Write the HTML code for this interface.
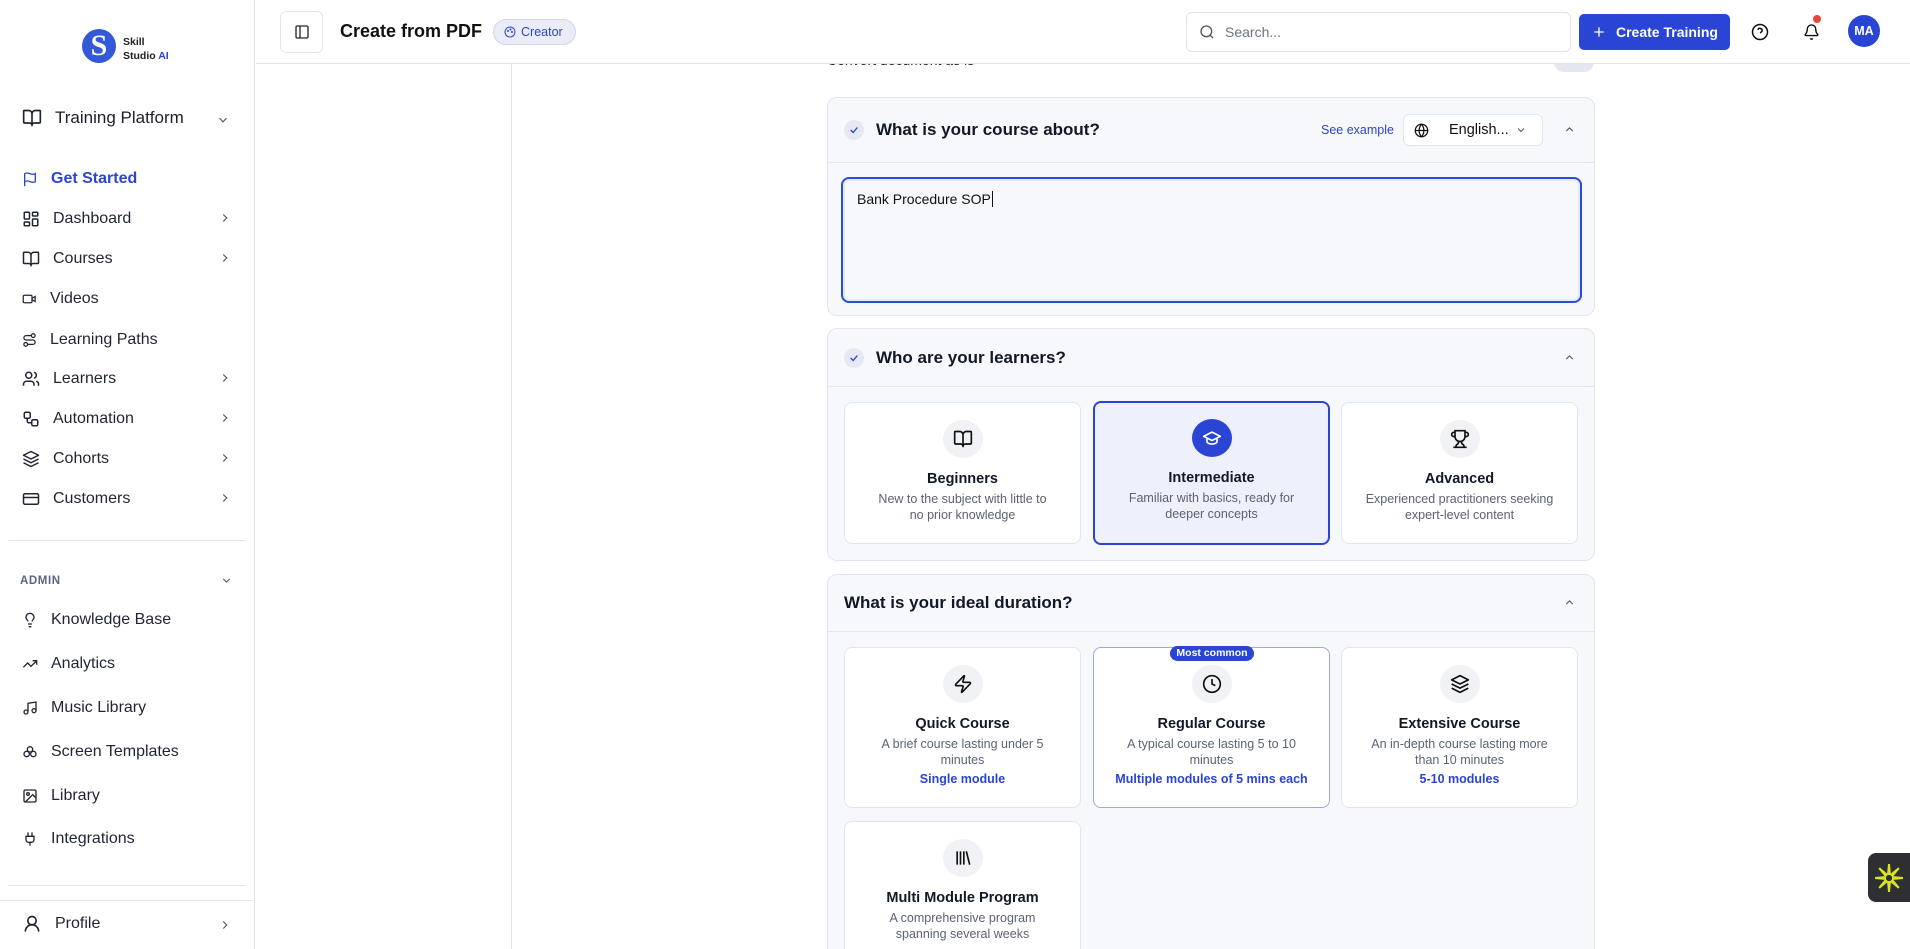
<!DOCTYPE html>
<html><head><meta charset="utf-8"><style>
*{box-sizing:border-box;margin:0;padding:0}
html,body{width:1910px;height:949px;overflow:hidden}
body{background:#fff;font-family:"Liberation Sans",sans-serif;color:#111827;position:relative}
.abs{position:absolute}
svg{display:block}
.side{position:absolute;left:0;top:0;width:255px;height:949px;border-right:1px solid #e3e6ee;background:#fff}
.nav{position:absolute;left:22px;display:flex;align-items:center;font-size:16px;color:#1f2533}
.nav svg{margin-right:13px}
.hdr{position:absolute;left:256px;top:0;right:0;height:64px;border-bottom:1px solid #e3e6ee;background:#fff}
.card{position:absolute;left:827px;width:768px;background:#f7f8fc;border:1px solid #e1e5f0;border-radius:10px}
.chd{position:absolute;left:0;right:0;top:0;border-bottom:1px solid #e1e5f0}
.ct{position:absolute;font-size:17px;font-weight:600;color:#111827}
.chk{position:absolute;width:20px;height:20px;border-radius:50%;background:#e6e9f3}
.opt{position:absolute;width:237px;background:#fff;border:1px solid #e1e5f0;border-radius:8px;text-align:center}
.ic{width:40px;height:38px;border-radius:50%;background:#f0f2f6;margin:17px auto 0;display:flex;align-items:center;justify-content:center}
.ot{font-size:14.5px;font-weight:600;margin-top:13px;color:#111827}
.od{font-size:12.5px;color:#5b6272;line-height:15.5px;margin-top:5px;padding:0 26px}
.ob{font-size:12.5px;color:#2a44d4;font-weight:600;margin-top:4px}
</style></head><body>

<div class="side">
  <div class="abs" style="left:82px;top:29px;width:34px;height:34px;border-radius:50%;background:#3359d8;color:#fff;font-size:30px;font-weight:700;text-align:center;line-height:34px;font-family:'Liberation Serif',serif">S</div>
  <div class="abs" style="left:123px;top:35px;font-size:10.5px;font-weight:600;line-height:14px;color:#222">Skill<br>Studio <span style="color:#2a44d4">AI</span></div>

  <div class="nav" style="left:22px;top:108px;font-size:17px;font-weight:500;color:#1b1f2a">
    <svg width="20" height="20" viewBox="0 0 24 24" fill="none" stroke="#1f2533" stroke-width="2" stroke-linecap="round" stroke-linejoin="round"><path d="M12 7v14M3 18a1 1 0 0 1-1-1V4a1 1 0 0 1 1-1h5a4 4 0 0 1 4 4 4 4 0 0 1 4-4h5a1 1 0 0 1 1 1v13a1 1 0 0 1-1 1h-6a3 3 0 0 0-3 3 3 3 0 0 0-3-3z"/></svg>Training Platform</div>
  <svg class="abs" style="left:216px;top:113px" width="14" height="14" viewBox="0 0 24 24" fill="none" stroke="#555" stroke-width="2"><path d="m6 9 6 6 6-6"/></svg>

  <div class="nav" style="top:170px;color:#2a44d4;font-weight:600"><svg width="16" height="18" viewBox="0 0 24 24" fill="none" stroke="#2a44d4" stroke-width="2" stroke-linecap="round"><path d="M4 22V4s1-1 4-1 5 2 8 2 4-1 4-1v12s-1 1-4 1-5-2-8-2-4 1-4 1"/></svg>Get Started</div>
  <div class="nav" style="top:210px"><svg width="18" height="18" viewBox="0 0 24 24" fill="none" stroke="#1f2533" stroke-width="2"><rect x="3" y="3" width="7" height="9" rx="1"/><rect x="14" y="3" width="7" height="5" rx="1"/><rect x="14" y="12" width="7" height="9" rx="1"/><rect x="3" y="16" width="7" height="5" rx="1"/></svg>Dashboard</div>
  <div class="nav" style="top:250px"><svg width="18" height="18" viewBox="0 0 24 24" fill="none" stroke="#1f2533" stroke-width="2" stroke-linejoin="round"><path d="M12 7v14M3 18a1 1 0 0 1-1-1V4a1 1 0 0 1 1-1h5a4 4 0 0 1 4 4 4 4 0 0 1 4-4h5a1 1 0 0 1 1 1v13a1 1 0 0 1-1 1h-6a3 3 0 0 0-3 3 3 3 0 0 0-3-3z"/></svg>Courses</div>
  <div class="nav" style="top:290px"><svg width="15" height="18" viewBox="0 0 24 24" fill="none" stroke="#1f2533" stroke-width="2"><path d="m16 13 5 3V8l-5 3"/><rect x="2" y="6" width="14" height="12" rx="2"/></svg>Videos</div>
  <div class="nav" style="top:331px"><svg width="15" height="18" viewBox="0 0 24 24" fill="none" stroke="#1f2533" stroke-width="2"><circle cx="6" cy="19" r="3"/><path d="M9 19h8.5a3.5 3.5 0 0 0 0-7h-11a3.5 3.5 0 0 1 0-7H15"/><circle cx="18" cy="5" r="3"/></svg>Learning Paths</div>
  <div class="nav" style="top:370px"><svg width="18" height="18" viewBox="0 0 24 24" fill="none" stroke="#1f2533" stroke-width="2"><path d="M16 21v-2a4 4 0 0 0-4-4H6a4 4 0 0 0-4 4v2"/><circle cx="9" cy="7" r="4"/><path d="M22 21v-2a4 4 0 0 0-3-3.9M16 3.1a4 4 0 0 1 0 7.8"/></svg>Learners</div>
  <div class="nav" style="top:410px"><svg width="18" height="18" viewBox="0 0 24 24" fill="none" stroke="#1f2533" stroke-width="2"><rect x="3" y="3" width="8" height="8" rx="2"/><path d="M7 11v4a2 2 0 0 0 2 2h4"/><rect x="13" y="13" width="8" height="8" rx="2"/></svg>Automation</div>
  <div class="nav" style="top:450px"><svg width="18" height="18" viewBox="0 0 24 24" fill="none" stroke="#1f2533" stroke-width="2" stroke-linejoin="round"><path d="m12 2 10 5-10 5L2 7z"/><path d="m2 12 10 5 10-5M2 17l10 5 10-5"/></svg>Cohorts</div>
  <div class="nav" style="top:490px"><svg width="18" height="18" viewBox="0 0 24 24" fill="none" stroke="#1f2533" stroke-width="2"><rect x="2" y="5" width="20" height="14" rx="2"/><path d="M2 10h20"/></svg>Customers</div>

  <svg class="abs" style="left:218px;top:211px" width="14" height="14" viewBox="0 0 24 24" fill="none" stroke="#555" stroke-width="2"><path d="m9 6 6 6-6 6"/></svg>
  <svg class="abs" style="left:218px;top:251px" width="14" height="14" viewBox="0 0 24 24" fill="none" stroke="#555" stroke-width="2"><path d="m9 6 6 6-6 6"/></svg>
  <svg class="abs" style="left:218px;top:371px" width="14" height="14" viewBox="0 0 24 24" fill="none" stroke="#555" stroke-width="2"><path d="m9 6 6 6-6 6"/></svg>
  <svg class="abs" style="left:218px;top:411px" width="14" height="14" viewBox="0 0 24 24" fill="none" stroke="#555" stroke-width="2"><path d="m9 6 6 6-6 6"/></svg>
  <svg class="abs" style="left:218px;top:451px" width="14" height="14" viewBox="0 0 24 24" fill="none" stroke="#555" stroke-width="2"><path d="m9 6 6 6-6 6"/></svg>
  <svg class="abs" style="left:218px;top:491px" width="14" height="14" viewBox="0 0 24 24" fill="none" stroke="#555" stroke-width="2"><path d="m9 6 6 6-6 6"/></svg>

  <div class="abs" style="left:8px;top:540px;width:238px;height:1px;background:#e3e6ee"></div>
  <div class="abs" style="left:20px;top:575px;font-size:11.5px;font-weight:600;color:#5b6580;letter-spacing:.6px">ADMIN</div>
  <svg class="abs" style="left:220px;top:574px" width="13" height="13" viewBox="0 0 24 24" fill="none" stroke="#555" stroke-width="2"><path d="m6 9 6 6 6-6"/></svg>

  <div class="nav" style="top:611px"><svg width="16" height="16" viewBox="0 0 24 24" fill="none" stroke="#1f2533" stroke-width="2"><path d="M15 14c.2-1 .7-1.7 1.5-2.5 1-.9 1.5-2.2 1.5-3.5A6 6 0 0 0 6 8c0 1 .2 2.2 1.5 3.5.7.7 1.3 1.5 1.5 2.5M9 18h6M10 22h4"/></svg>Knowledge Base</div>
  <div class="nav" style="top:655px"><svg width="16" height="16" viewBox="0 0 24 24" fill="none" stroke="#1f2533" stroke-width="2"><path d="m22 7-8.5 8.5-5-5L2 17M16 7h6v6"/></svg>Analytics</div>
  <div class="nav" style="top:699px"><svg width="16" height="16" viewBox="0 0 24 24" fill="none" stroke="#1f2533" stroke-width="2"><path d="M9 18V5l12-2v13"/><circle cx="6" cy="18" r="3"/><circle cx="18" cy="16" r="3"/></svg>Music Library</div>
  <div class="nav" style="top:743px"><svg width="16" height="16" viewBox="0 0 24 24" fill="none" stroke="#1f2533" stroke-width="2"><circle cx="12" cy="8" r="4"/><circle cx="7" cy="15" r="4"/><circle cx="17" cy="15" r="4"/></svg>Screen Templates</div>
  <div class="nav" style="top:787px"><svg width="16" height="16" viewBox="0 0 24 24" fill="none" stroke="#1f2533" stroke-width="2"><rect x="3" y="3" width="18" height="18" rx="2"/><circle cx="9" cy="9" r="2"/><path d="m21 15-5-5L5 21"/></svg>Library</div>
  <div class="nav" style="top:830px"><svg width="16" height="16" viewBox="0 0 24 24" fill="none" stroke="#1f2533" stroke-width="2"><path d="M12 22v-5M9 8V2M15 8V2M18 8v5a4 4 0 0 1-4 4h-4a4 4 0 0 1-4-4V8z"/></svg>Integrations</div>

  <div class="abs" style="left:8px;top:885px;width:238px;height:1px;background:#e3e6ee"></div>
  <div class="abs" style="left:0;top:900px;width:255px;height:1px;background:#e3e6ee"></div>
  <div class="nav" style="top:914px"><svg width="20" height="20" viewBox="0 0 24 24" fill="none" stroke="#1f2533" stroke-width="2"><circle cx="12" cy="8" r="5"/><path d="M20 21a8 8 0 0 0-16 0"/></svg>Profile</div>
  <svg class="abs" style="left:218px;top:918px" width="14" height="14" viewBox="0 0 24 24" fill="none" stroke="#555" stroke-width="2"><path d="m9 6 6 6-6 6"/></svg>
</div>

<div class="abs" style="left:511px;top:64px;width:1px;height:885px;background:#e3e6ee"></div>

<div class="abs" style="left:827px;top:52px;font-size:14px;color:#222">Convert document as is</div>
<div class="abs" style="left:1554px;top:52px;width:40px;height:20px;border-radius:10px;background:#e4e7ef"></div>

<div class="hdr">
  <div class="abs" style="left:24px;top:11px;width:43px;height:42px;border:1px solid #e3e6ee;border-radius:6px;display:flex;align-items:center;justify-content:center"><svg width="16" height="16" viewBox="0 0 24 24" fill="none" stroke="#1f2533" stroke-width="2"><rect x="3" y="3" width="18" height="18" rx="2"/><path d="M9 3v18"/></svg></div>
  <div class="abs" style="left:84px;top:21px;font-size:18px;font-weight:700;color:#111">Create from PDF</div>
  <div class="abs" style="left:237px;top:19px;width:83px;height:26px;border-radius:13px;background:#eaedf8;border:1px solid #cfd6ee;font-size:12.5px;color:#2a44d4;display:flex;align-items:center;padding-left:10px"><svg width="12" height="12" viewBox="0 0 24 24" fill="none" stroke="#2a44d4" stroke-width="2" style="margin-right:5px"><circle cx="12" cy="12" r="10"/><circle cx="8" cy="10" r="1"/><circle cx="13" cy="7" r="1"/><circle cx="16" cy="12" r="1"/></svg>Creator</div>
  <div class="abs" style="left:930px;top:12px;width:385px;height:40px;border:1px solid #dfe3ee;border-radius:6px;display:flex;align-items:center;padding-left:12px;font-size:14px;color:#6b7280"><svg width="16" height="16" viewBox="0 0 24 24" fill="none" stroke="#555" stroke-width="2" style="margin-right:10px"><circle cx="11" cy="11" r="8"/><path d="m21 21-4.3-4.3"/></svg>Search...</div>
  <div class="abs" style="left:1323px;top:14px;width:151px;height:36px;border-radius:5px;background:#2a44d4;color:#fff;font-size:14px;font-weight:600;display:flex;align-items:center;padding-left:12px"><svg width="16" height="16" viewBox="0 0 24 24" fill="none" stroke="#fff" stroke-width="2" style="margin-right:9px"><path d="M12 5v14M5 12h14"/></svg>Create Training</div>
  <svg class="abs" style="left:1495px;top:23px" width="18" height="18" viewBox="0 0 24 24" fill="none" stroke="#111" stroke-width="2"><circle cx="12" cy="12" r="10"/><path d="M9.1 9a3 3 0 0 1 5.8 1c0 2-3 3-3 3M12 17h.01"/></svg>
  <svg class="abs" style="left:1547px;top:23px" width="17" height="18" viewBox="0 0 24 24" fill="none" stroke="#111" stroke-width="2"><path d="M10.3 21a1.9 1.9 0 0 0 3.4 0M3.3 15.3A1 1 0 0 0 4 17h16a1 1 0 0 0 .7-1.7C19.4 14 18 12.6 18 8A6 6 0 0 0 6 8c0 4.6-1.4 6-2.7 7.3"/></svg>
  <div class="abs" style="left:1557px;top:15px;width:8px;height:8px;border-radius:50%;background:#e5483b"></div>
  <div class="abs" style="left:1592px;top:15px;width:32px;height:32px;border-radius:50%;background:#2a44d4;color:#fff;font-size:12.5px;font-weight:700;text-align:center;line-height:32px">MA</div>
</div>

<div class="card" style="top:97px;height:219px">
  <div class="chd" style="height:65px"></div>
  <div class="chk" style="left:16px;top:22px"><svg width="20" height="20" viewBox="0 0 24 24" fill="none" stroke="#2a44d4" stroke-width="1.6"><path d="m8 12 3 3 5-6"/></svg></div>
  <div class="ct" style="left:48px;top:22px">What is your course about?</div>
  <div class="abs" style="left:493px;top:25px;font-size:12.5px;color:#2a44d4">See example</div>
  <div class="abs" style="left:575px;top:16px;width:140px;height:32px;border:1px solid #e1e5f0;border-radius:6px;background:#fff;display:flex;align-items:center;padding-left:10px;font-size:14.5px;color:#111"><svg width="15" height="15" viewBox="0 0 24 24" fill="none" stroke="#111" stroke-width="2" style="margin-right:20px"><circle cx="12" cy="12" r="10"/><path d="M2 12h20M12 2a15 15 0 0 1 0 20 15 15 0 0 1 0-20"/></svg>English...<svg width="12" height="12" viewBox="0 0 24 24" fill="none" stroke="#555" stroke-width="2" style="margin-left:6px"><path d="m6 9 6 6 6-6"/></svg></div>
  <svg class="abs" style="left:735px;top:25px" width="13" height="13" viewBox="0 0 24 24" fill="none" stroke="#555" stroke-width="2"><path d="m6 15 6-6 6 6"/></svg>
  <div class="abs" style="left:13px;top:79px;width:741px;height:126px;border:2px solid #2a4fd6;border-radius:8px;background:#f7f8fc;box-shadow:inset 0 0 0 2px #e6eaf7"></div>
  <div class="abs" style="left:29px;top:93px;font-size:14px;color:#111">Bank Procedure SOP<span style="border-left:1px solid #111;margin-left:1px"></span></div>
</div>

<div class="card" style="top:328px;height:233px">
  <div class="chd" style="height:58px"></div>
  <div class="chk" style="left:16px;top:19px"><svg width="20" height="20" viewBox="0 0 24 24" fill="none" stroke="#2a44d4" stroke-width="1.6"><path d="m8 12 3 3 5-6"/></svg></div>
  <div class="ct" style="left:48px;top:19px">Who are your learners?</div>
  <svg class="abs" style="left:735px;top:22px" width="13" height="13" viewBox="0 0 24 24" fill="none" stroke="#555" stroke-width="2"><path d="m6 15 6-6 6 6"/></svg>
</div>
<div class="opt" style="left:844px;top:402px;height:142px">
  <div class="ic"><svg width="20" height="20" viewBox="0 0 24 24" fill="none" stroke="#111" stroke-width="2" stroke-linejoin="round"><path d="M12 7v14M3 18a1 1 0 0 1-1-1V4a1 1 0 0 1 1-1h5a4 4 0 0 1 4 4 4 4 0 0 1 4-4h5a1 1 0 0 1 1 1v13a1 1 0 0 1-1 1h-6a3 3 0 0 0-3 3 3 3 0 0 0-3-3z"/></svg></div>
  <div class="ot">Beginners</div><div class="od">New to the subject with little to no prior knowledge</div>
</div>
<div class="opt" style="left:1093px;top:401px;height:144px;background:#eef1fb;border:2px solid #2a44d4">
  <div class="ic" style="background:#2a44d4;margin-top:16px"><svg width="20" height="20" viewBox="0 0 24 24" fill="none" stroke="#fff" stroke-width="2" stroke-linejoin="round"><path d="M22 10 12 5 2 10l10 5z"/><path d="M6 12v5c3 3 9 3 12 0v-5"/></svg></div>
  <div class="ot">Intermediate</div><div class="od" style="padding:0 30px">Familiar with basics, ready for deeper concepts</div>
</div>
<div class="opt" style="left:1341px;top:402px;height:142px">
  <div class="ic"><svg width="20" height="20" viewBox="0 0 24 24" fill="none" stroke="#111" stroke-width="2"><path d="M6 9H4.5a2.5 2.5 0 0 1 0-5H6M18 9h1.5a2.5 2.5 0 0 0 0-5H18M4 22h16M10 14.7V17c0 .6-.5 1-1 1.2-1.2.5-2 2-2 3.8M14 14.7V17c0 .6.5 1 1 1.2 1.2.5 2 2 2 3.8M18 2H6v7a6 6 0 0 0 12 0z"/></svg></div>
  <div class="ot">Advanced</div><div class="od" style="padding:0 20px">Experienced practitioners seeking expert-level content</div>
</div>

<div class="card" style="top:574px;height:400px">
  <div class="chd" style="height:57px"></div>
  <div class="ct" style="left:16px;top:18px">What is your ideal duration?</div>
  <svg class="abs" style="left:735px;top:21px" width="13" height="13" viewBox="0 0 24 24" fill="none" stroke="#555" stroke-width="2"><path d="m6 15 6-6 6 6"/></svg>
</div>
<div class="opt" style="left:844px;top:647px;height:161px">
  <div class="ic"><svg width="20" height="20" viewBox="0 0 24 24" fill="none" stroke="#111" stroke-width="2" stroke-linejoin="round"><path d="M4 14a1 1 0 0 1-.8-1.6l9.9-10.2c.3-.3.8 0 .7.4l-1.9 6A1 1 0 0 0 12.8 10H20a1 1 0 0 1 .8 1.6l-9.9 10.2c-.3.3-.8 0-.7-.4l1.9-6A1 1 0 0 0 11.2 14z"/></svg></div>
  <div class="ot">Quick Course</div><div class="od" style="padding:0 30px">A brief course lasting under 5 minutes</div><div class="ob">Single module</div>
</div>
<div class="opt" style="left:1093px;top:647px;height:161px;border-color:#9aa8e6">
  <div class="abs" style="left:76px;top:-2px;width:84px;height:15px;border-radius:8px;background:#2a44d4;color:#fff;font-size:10.5px;line-height:15px;font-weight:600">Most common</div>
  <div class="ic"><svg width="20" height="20" viewBox="0 0 24 24" fill="none" stroke="#111" stroke-width="2"><circle cx="12" cy="12" r="10"/><path d="M12 6v6l4 2"/></svg></div>
  <div class="ot">Regular Course</div><div class="od" style="padding:0 28px">A typical course lasting 5 to 10 minutes</div><div class="ob">Multiple modules of 5 mins each</div>
</div>
<div class="opt" style="left:1341px;top:647px;height:161px">
  <div class="ic"><svg width="20" height="20" viewBox="0 0 24 24" fill="none" stroke="#111" stroke-width="2" stroke-linejoin="round"><path d="m12 2 10 5-10 5L2 7z"/><path d="m2 12 10 5 10-5M2 17l10 5 10-5"/></svg></div>
  <div class="ot">Extensive Course</div><div class="od" style="padding:0 22px">An in-depth course lasting more than 10 minutes</div><div class="ob">5-10 modules</div>
</div>
<div class="opt" style="left:844px;top:821px;height:160px">
  <div class="ic"><svg width="20" height="20" viewBox="0 0 24 24" fill="none" stroke="#111" stroke-width="2"><path d="M5 4v16M9 4v16M13 4v16M16 4l4 16"/></svg></div>
  <div class="ot">Multi Module Program</div><div class="od" style="padding:0 38px">A comprehensive program spanning several weeks</div>
</div>

<div class="abs" style="left:1868px;top:853px;width:42px;height:49px;background:#2d2f33;border-radius:8px 0 0 8px;display:flex;align-items:center;justify-content:center">
  <svg width="30" height="30" viewBox="0 0 30 30"><g fill="#d8e41d" transform="translate(15 15)">
  <polygon points="-2,-3 2,-3 1,-14 -1,-14"/><polygon points="-2,-3 2,-3 1,-14 -1,-14" transform="rotate(45)"/><polygon points="-2,-3 2,-3 1,-14 -1,-14" transform="rotate(90)"/><polygon points="-2,-3 2,-3 1,-14 -1,-14" transform="rotate(135)"/><polygon points="-2,-3 2,-3 1,-14 -1,-14" transform="rotate(180)"/><polygon points="-2,-3 2,-3 1,-14 -1,-14" transform="rotate(225)"/><polygon points="-2,-3 2,-3 1,-14 -1,-14" transform="rotate(270)"/><polygon points="-2,-3 2,-3 1,-14 -1,-14" transform="rotate(315)"/></g></svg>
</div>
</body></html>
